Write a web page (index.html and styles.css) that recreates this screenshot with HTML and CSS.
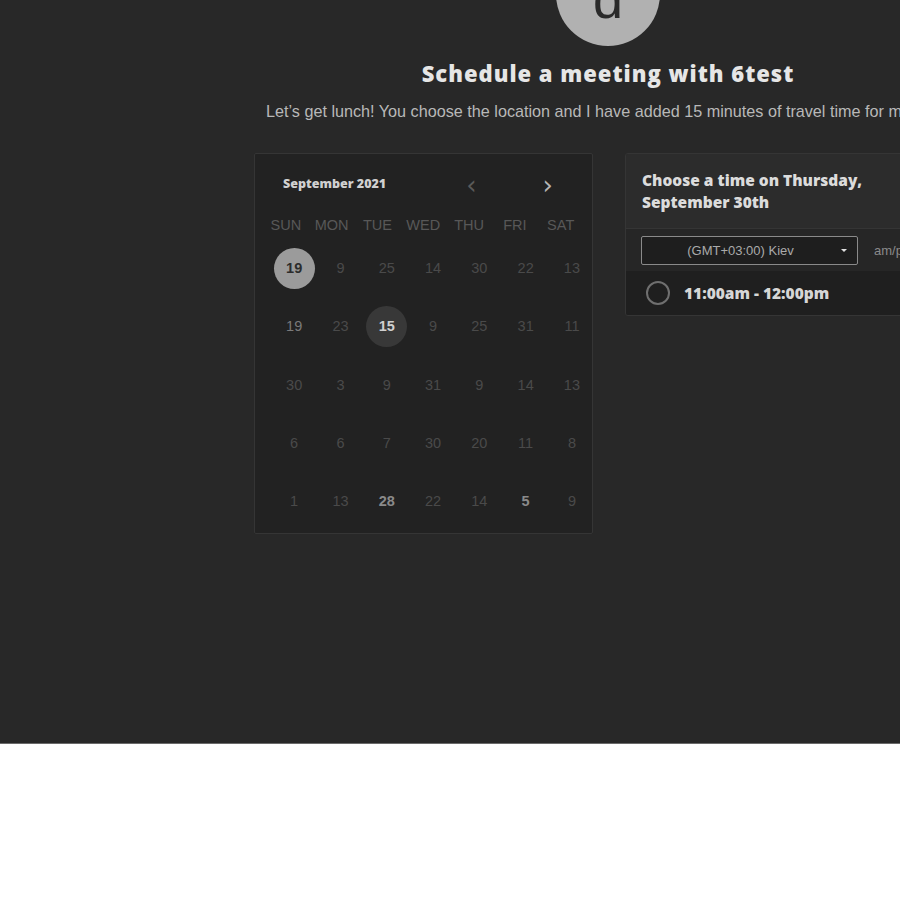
FILE: index.html
```html
<!DOCTYPE html>
<html>
<head>
<meta charset="utf-8">
<link rel="stylesheet" href="styles.css">
</head>
<body>
<div class="page">
  <div class="wrap">
    <div class="avatar">d</div>
    <h1 class="title">Schedule a meeting with 6test</h1>
    <p class="subtitle">Let’s get lunch! You choose the location and I have added 15 minutes of travel time for me.</p>
    <div class="row">
      <div class="calendar">
        <div class="cal-head">
          <span class="month">September 2021</span>
          <span class="nav prev">&#8249;</span>
          <span class="nav next">&#8250;</span>
        </div>
        <div class="weekdays">
          <span>SUN</span><span>MON</span><span>TUE</span><span>WED</span><span>THU</span><span>FRI</span><span>SAT</span>
        </div>
        <div class="dates">
          <span class="d sel">19</span><span class="d">9</span><span class="d">25</span><span class="d">14</span><span class="d">30</span><span class="d">22</span><span class="d">13</span>
          <span class="d mid">19</span><span class="d">23</span><span class="d today">15</span><span class="d">9</span><span class="d">25</span><span class="d">31</span><span class="d">11</span>
          <span class="d">30</span><span class="d">3</span><span class="d">9</span><span class="d">31</span><span class="d">9</span><span class="d">14</span><span class="d">13</span>
          <span class="d">6</span><span class="d">6</span><span class="d">7</span><span class="d">30</span><span class="d">20</span><span class="d">11</span><span class="d">8</span>
          <span class="d">1</span><span class="d">13</span><span class="d avail">28</span><span class="d">22</span><span class="d">14</span><span class="d avail">5</span><span class="d">9</span>
        </div>
      </div>
      <div class="times">
        <div class="times-head">Choose a time on Thursday, September 30th</div>
        <div class="tz-row">
          <div class="tz-select"><span>(GMT+03:00) Kiev</span><span class="caret"></span></div>
          <span class="ampm">am/pm</span>
        </div>
        <div class="slot">
          <span class="radio"></span>
          <span class="slot-label">11:00am - 12:00pm</span>
        </div>
      </div>
    </div>
  </div>
</div>
</body>
</html>
```

FILE: styles.css
```css
html, body {
  margin: 0;
  padding: 0;
  background: #ffffff;
}

.page {
  height: 744px;
  background: #282828;
  overflow: hidden;
  border-bottom: 1px solid #6a6a6a;
  box-sizing: border-box;
}

.wrap {
  width: 708px;
  margin-left: 254px;
  display: flex;
  flex-direction: column;
  font-family: "Liberation Sans", Arial, sans-serif;
}

.avatar {
  align-self: center;
  width: 104px;
  height: 104px;
  margin-top: -58px;
  padding-top: 30px;
  box-sizing: border-box;
  border-radius: 50%;
  background: #b1b1b1;
  color: #2a2a2a;
  font-family: "Liberation Sans", Arial, sans-serif;
  font-size: 54px;
  line-height: 1;
  display: flex;
  align-items: flex-start;
  justify-content: center;
}

.title {
  margin: 14px 0 0;
  text-align: center;
  font-family: "Open Sans", "Liberation Sans", sans-serif;
  font-weight: 800;
  font-size: 22px;
  letter-spacing: 1px;
  line-height: 26px;
  color: #e6e6e6;
}

.subtitle {
  margin: 16px 0 0 12px;
  white-space: nowrap;
  font-size: 16.2px;
  line-height: 19px;
  color: #b8b8b8;
}

.row {
  margin-top: 32px;
  display: flex;
  gap: 32px;
  align-items: flex-start;
}

.calendar {
  width: 339px;
  height: 381px;
  box-sizing: border-box;
  background: #222222;
  border: 1px solid #353535;
  border-radius: 2px;
}

.cal-head {
  height: 58px;
  display: flex;
  align-items: center;
  padding-left: 28px;
}

.month {
  font-family: "Open Sans", "Liberation Sans", sans-serif;
  font-weight: 800;
  font-size: 12.5px;
  color: #d0d0d0;
}

.nav {
  font-size: 26px;
  line-height: 1;
  margin-top: 4px;
  font-family: "DejaVu Sans", sans-serif;
}

.prev {
  margin-left: 80px;
  color: #5a5a5a;
}

.next {
  margin-left: 66px;
  color: #b5b5b5;
}

.weekdays {
  display: grid;
  grid-template-columns: repeat(7, 45.8px);
  padding-left: 8px;
  height: 26px;
  align-items: center;
  font-size: 14.5px;
  color: #585858;
  text-align: center;
}

.dates {
  display: grid;
  grid-template-columns: repeat(7, 46.3px);
  grid-auto-rows: 58.3px;
  padding-left: 16px;
  margin-top: 1px;
  font-size: 14.5px;
  color: #4a4a4a;
  text-align: center;
}

.d {
  display: flex;
  align-items: center;
  justify-content: center;
}

.sel, .today {
  width: 41px;
  height: 41px;
  border-radius: 50%;
  justify-self: center;
  align-self: center;
  font-weight: 700;
}

.sel {
  background: #9b9b9b;
  color: #2c2c2c;
}

.today {
  background: #383838;
  color: #cfcfcf;
}

.mid {
  color: #7a7a7a;
}

.avail {
  color: #8a8a8a;
  font-weight: 700;
}

.times {
  width: 337px;
  flex: none;
  box-sizing: border-box;
  border: 1px solid #353535;
  border-radius: 3px;
  overflow: hidden;
}

.times-head {
  background: #2c2c2c;
  padding: 15px 50px 14px 16px;
  height: 75px;
  box-sizing: border-box;
  font-family: "Open Sans", "Liberation Sans", sans-serif;
  font-weight: 800;
  font-size: 15.5px;
  line-height: 22px;
  color: #dcdcdc;
  border-bottom: 1px solid #353535;
}

.tz-row {
  background: #262626;
  height: 42px;
  display: flex;
  align-items: center;
  padding-left: 15px;
}

.tz-select {
  width: 217px;
  height: 29px;
  box-sizing: border-box;
  border: 1px solid #8a8a8a;
  border-radius: 2px;
  background: #1e1e1e;
  display: flex;
  align-items: center;
  justify-content: center;
  position: relative;
  font-size: 13px;
  color: #aaaaaa;
  padding-right: 18px;
}

.caret {
  position: absolute;
  right: 10px;
  top: 12px;
  width: 0;
  height: 0;
  border-left: 3px solid transparent;
  border-right: 3px solid transparent;
  border-top: 3px solid #e0e0e0;
}

.ampm {
  margin-left: 16px;
  font-size: 13px;
  color: #8a8a8a;
}

.slot {
  background: #1f1f1f;
  height: 44px;
  display: flex;
  align-items: center;
  padding-left: 20px;
}

.radio {
  width: 20px;
  height: 20px;
  border: 2px solid #6f6f6f;
  border-radius: 50%;
  flex: none;
}

.slot-label {
  margin-left: 14px;
  font-family: "Open Sans", "Liberation Sans", sans-serif;
  font-weight: 800;
  font-size: 15.5px;
  color: #d6d6d6;
}
```
